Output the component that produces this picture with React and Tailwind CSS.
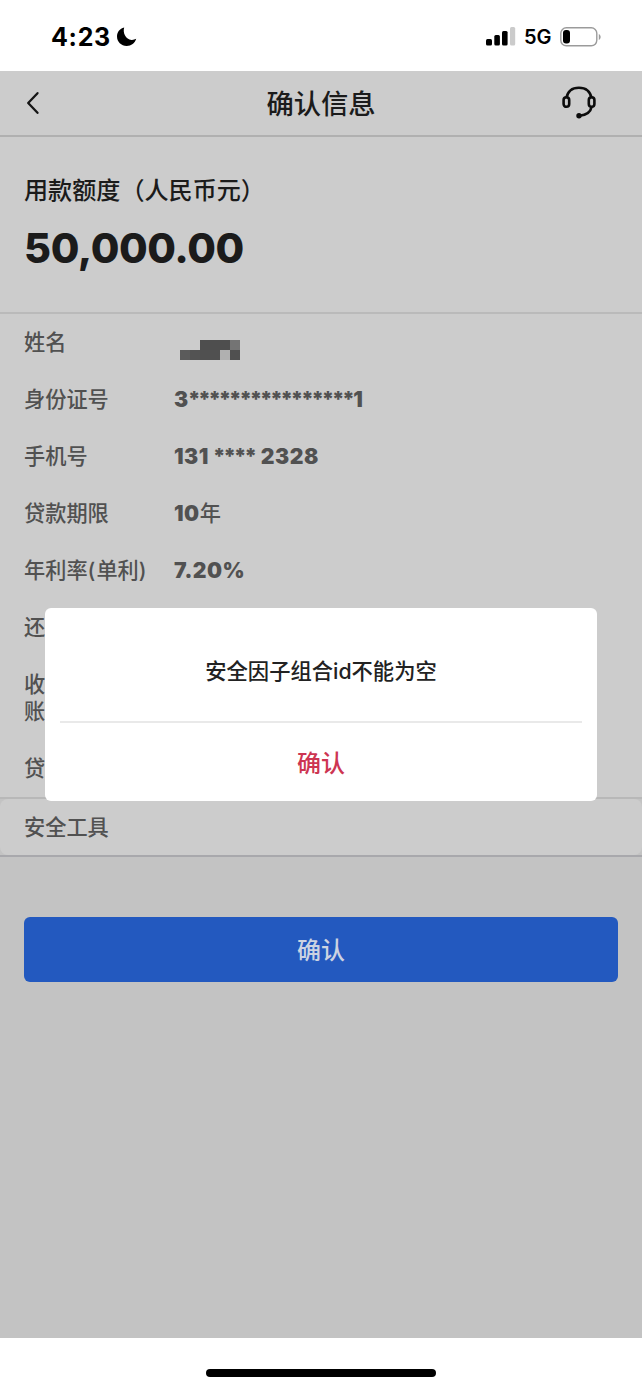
const rows = [
  { label: "姓名", masked: true },
  { label: "身份证号", value: ["3", "****************", "1"] },
  { label: "手机号", value: ["131", "****", "2328"] },
  { label: "贷款期限", value: ["10", "年"] },
  { label: "年利率(单利)", value: ["7.20%"] },
  { label: "还" },
  { label: "收账", wrap: true },
  { label: "贷" },
];

function StatusBar() {
  return (
    <div className="flex h-[71px] items-start justify-between bg-white pl-[51px] pr-[41px] text-black">
      <div className="flex items-center pt-[21px]">
        <span className="w-[65px] text-[25px] leading-8 font-bold tracking-[0.7px] whitespace-nowrap">4:23</span>
        <svg width="21" height="20" viewBox="0 0 21 20">
          <path d="M8.2 .6C6.5 5.8 9.8 12.8 15.5 12.9c1.7.1 3.2-.3 4.7-1.1C19 16.3 15.2 19 10.7 19 5.2 19 1 15 1 9.6 1 5.4 3.7 1.7 8.2.6Z" />
        </svg>
      </div>
      <div className="flex items-center pt-[21px]">
        <svg width="30" height="19" viewBox="0 0 30 19">
          <rect x="0" y="12" width="6" height="6.5" rx="1.5" />
          <rect x="8.3" y="8" width="5.6" height="10.5" rx="1.5" />
          <rect x="16" y="4" width="5.6" height="14.5" rx="1.5" />
          <rect x="24" y="0" width="5.2" height="18.5" rx="1.5" fill="#cbcbcb" />
        </svg>
        <span className="ml-[8px] w-[36px] pt-px text-[20px] leading-[30px] font-semibold whitespace-nowrap">5G</span>
        <svg width="41" height="20" viewBox="0 0 41 20">
          <rect x=".8" y=".8" width="36" height="18" rx="5.5" fill="none" stroke="#9b9b9b" strokeWidth="1.4" />
          <rect x="3" y="3" width="7" height="13.6" rx="3" />
          <path d="M38.8 7v6c2.4-1 2.4-5 0-6Z" fill="#9b9b9b" />
        </svg>
      </div>
    </div>
  );
}

function Header() {
  return (
    <div className="grid h-[66px] grid-cols-[1fr_auto_1fr] items-center border-b-2 border-[#b0b0b0] pl-[25px] pr-[45px]">
      <svg width="16" height="24" viewBox="0 0 16 24" fill="none" stroke="#151515" strokeWidth="2.3" strokeLinecap="round" strokeLinejoin="round">
        <path d="M12.5 2.2 3.2 12l9.3 9.8" />
      </svg>
      <h1 className="-mr-[20px] pt-[3px] text-[27.3px] leading-10 font-medium">确认信息</h1>
      <svg className="justify-self-end" width="36" height="34" viewBox="0 0 36 34" fill="none" stroke="#0c0c0c" strokeWidth="2.6">
        <path d="M5.3 12.2C6.6 5.5 11.3 1.7 17.9 1.7s11.4 3.8 12.7 10.5M30.7 20.5c-1 5.1-4.6 8.6-12 9.2" />
        <rect x="2.6" y="11.2" width="5.6" height="9.6" rx="2.8" />
        <rect x="27.8" y="11.2" width="5.6" height="9.6" rx="2.8" />
        <circle cx="18" cy="29.7" r="2.7" fill="#0c0c0c" stroke="none" />
      </svg>
    </div>
  );
}

// Mosaic that hides the customer's name
function MaskedName() {
  return (
    <div className="ml-[6px] mt-[11px] grid h-5 w-[60px] grid-cols-6">
      <span />
      <span />
      <span className="bg-[#4e4e4e]" />
      <span className="bg-[#4e4e4e]" />
      <span className="bg-[#4e4e4e]" />
      <span className="bg-[#747474]" />
      <span className="bg-[#5b5b5b]" />
      <span className="bg-[#535353]" />
      <span className="bg-[#505050]" />
      <span className="bg-[#505050]" />
      <span className="bg-[#b0b0b0]" />
      <span className="bg-[#505050]" />
    </div>
  );
}

function partClass(part) {
  if (part === "****") return "ml-[4px] mr-[6px] tracking-[-2.4px]";
  if (part.includes("*")) return "-ml-px mr-px tracking-[-2.6px]";
  if (part === "年") return "font-medium";
  return "tracking-[0.5px]";
}

function InfoRow({ row }) {
  return (
    <div className="flex text-[21.2px] leading-[27px] text-[#515151]">
      <div className="w-[150px] shrink-0">
        <div className={row.wrap ? "w-[22px] font-medium break-all" : "font-medium whitespace-nowrap"}>
          {row.label.split(/([()])/).map((part, i) => (
            <span key={i} className={/[()]/.test(part) ? "tracking-[1px]" : ""}>{part}</span>
          ))}
        </div>
      </div>
      {row.masked && (
        <div className="h-[27px]">
          <MaskedName />
        </div>
      )}
      {row.value && (
        <div className="font-black whitespace-nowrap">
          {row.value.map((part) => (
            <span key={part} className={partClass(part)}>{part}</span>
          ))}
        </div>
      )}
    </div>
  );
}

export default function App() {
  return (
    <div className="relative flex h-[1389px] w-[642px] flex-col overflow-hidden bg-white font-['Inter','Noto_Sans_CJK_SC',sans-serif] text-[#1b1b1b]">
      <StatusBar />
      <main className="h-[1267px] bg-[#c3c3c3]">
        <div className="bg-[#cccccc]">
          <Header />
          <section className="h-[177px] border-b-2 border-[#bababa] pl-6 pt-[35px]">
            <p className="text-[24.1px] leading-[38px] font-medium">用款额度（人民币元）</p>
            <p className="mt-[13px] text-[41.5px] leading-[50px] font-extrabold tracking-[-0.4px]">50,000.00</p>
          </section>
          <section className="flex h-[483px] flex-col gap-[30px] pl-6 pt-[15px]">
            {rows.map((row) => (
              <InfoRow key={row.label} row={row} />
            ))}
          </section>
        </div>
        <div className="h-[60px] border-y-2 border-t-[#b8b8b8] border-b-[#a8a8ac] bg-[#c3c3c3]">
          <div className="h-full rounded-lg bg-[#cccccc] pl-6 pt-[13px] text-[21.2px] leading-[30px] font-medium text-[#515151]">
            安全工具
          </div>
        </div>
        <button className="mt-[60px] ml-6 h-[65px] w-[594px] rounded-md bg-[#2359bf] pt-[3px] text-[24px] font-medium text-[#ccd3e2]">
          确认
        </button>
      </main>
      <div className="flex h-[51px] justify-center pt-[31px]">
        <div className="h-2 w-[230px] rounded-full bg-black" />
      </div>

      <div className="absolute top-[608px] left-[45px] flex h-[193px] w-[552px] flex-col rounded-md bg-white px-[15px]">
        <p className="h-[115px] border-b-2 border-[#e9e9e9] pt-[48px] text-center text-[21.3px] leading-[30px] font-medium text-[#222222]">
          安全因子组合id不能为空
        </p>
        <button className="h-[78px] pt-[4px] text-[24px] font-medium text-[#cd3552]">确认</button>
      </div>
    </div>
  );
}
